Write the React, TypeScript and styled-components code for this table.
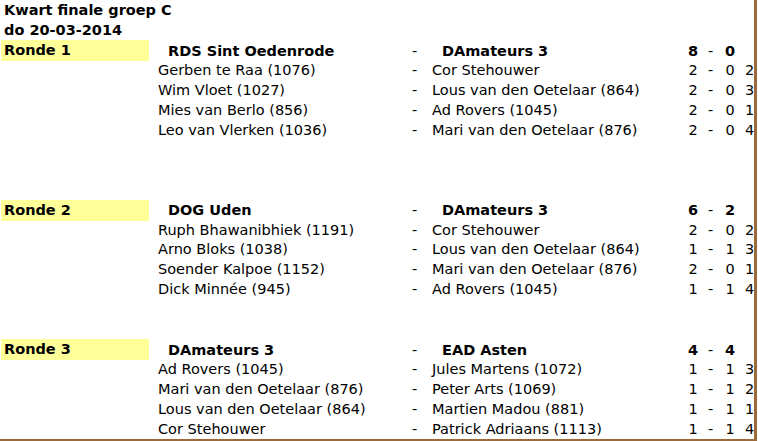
import React from 'react'
import styled, { createGlobalStyle } from 'styled-components'

const GlobalStyle = createGlobalStyle`
    html, body {
        margin: 0;
        padding: 0;
        background: #fff;
    }
    body {
        font-family: 'DejaVu Sans', Verdana, sans-serif;
        font-size: 14.5px;
        color: #000;
    }
`

const Sheet = styled.div`
    width: 754px;
    height: 439px;
    border-right: 3px solid #9c6a3b;
    border-bottom: 2px solid #9c6a3b;
    display: flex;
    flex-direction: column;
    overflow: hidden;
`

const Row = styled.div`
    display: grid;
    grid-template-columns: 150px 255px 27px 253px 16px 19px 20px 1fr;
    height: 20px;
    align-items: center;
    white-space: nowrap;
`

const Heading = styled.div`
    height: 20px;
    line-height: 21px;
    padding-left: 4px;
    font-weight: bold;
`

const Spacer = styled.div`
    height: 20px;
`

const RoundLabel = styled.div`
    margin-left: 1px;
    height: 21px;
    line-height: 21px;
    padding-left: 3px;
    background: #ffff99;
    font-weight: bold;
    width: 145px;
`

const Name = styled.div<{ $team?: boolean; $away?: boolean }>`
    font-weight: ${({ $team }) => ($team ? 'bold' : 'normal')};
    padding-left: ${({ $team, $away }) =>
        $away ? ($team ? '10px' : '0px') : $team ? '18px' : '8px'};
`

const Dash = styled.div`
    padding-left: 7px;
`

const Score = styled.div<{ $bold?: boolean }>`
    font-weight: ${({ $bold }) => ($bold ? 'bold' : 'normal')};
    text-align: center;
`

const Board = styled.div`
    padding-left: 5px;
`

type Game = { home: string; away: string; a: string; b: string; board: string }
type Round = { label: string; home: string; away: string; a: string; b: string; games: Game[]; gap: number }

const rounds: Round[] = [
    {
        label: 'Ronde 1',
        home: 'RDS Sint Oedenrode',
        away: 'DAmateurs 3',
        a: '8',
        b: '0',
        gap: 0,
        games: [
            { home: 'Gerben te Raa (1076)', away: 'Cor Stehouwer', a: '2', b: '0', board: '2' },
            { home: 'Wim Vloet (1027)', away: 'Lous van den Oetelaar (864)', a: '2', b: '0', board: '3' },
            { home: 'Mies van Berlo (856)', away: 'Ad Rovers (1045)', a: '2', b: '0', board: '1' },
            { home: 'Leo van Vlerken (1036)', away: 'Mari van den Oetelaar (876)', a: '2', b: '0', board: '4' },
        ],
    },
    {
        label: 'Ronde 2',
        home: 'DOG Uden',
        away: 'DAmateurs 3',
        a: '6',
        b: '2',
        gap: 3,
        games: [
            { home: 'Ruph Bhawanibhiek (1191)', away: 'Cor Stehouwer', a: '2', b: '0', board: '2' },
            { home: 'Arno Bloks (1038)', away: 'Lous van den Oetelaar (864)', a: '1', b: '1', board: '3' },
            { home: 'Soender Kalpoe (1152)', away: 'Mari van den Oetelaar (876)', a: '2', b: '0', board: '1' },
            { home: 'Dick Minnée (945)', away: 'Ad Rovers (1045)', a: '1', b: '1', board: '4' },
        ],
    },
    {
        label: 'Ronde 3',
        home: 'DAmateurs 3',
        away: 'EAD Asten',
        a: '4',
        b: '4',
        gap: 2,
        games: [
            { home: 'Ad Rovers (1045)', away: 'Jules Martens (1072)', a: '1', b: '1', board: '3' },
            { home: 'Mari van den Oetelaar (876)', away: 'Peter Arts (1069)', a: '1', b: '1', board: '2' },
            { home: 'Lous van den Oetelaar (864)', away: 'Martien Madou (881)', a: '1', b: '1', board: '1' },
            { home: 'Cor Stehouwer', away: 'Patrick Adriaans (1113)', a: '1', b: '1', board: '4' },
        ],
    },
]

export default function App() {
    return (
        <>
            <GlobalStyle />
            <Sheet>
                <Heading>Kwart finale groep C</Heading>
                <Heading>do 20-03-2014</Heading>
                {rounds.map((r) => (
                    <React.Fragment key={r.label}>
                        {Array.from({ length: r.gap }).map((_, i) => (
                            <Spacer key={i} />
                        ))}
                        <Row>
                            <RoundLabel>{r.label}</RoundLabel>
                            <Name $team>{r.home}</Name>
                            <Dash>-</Dash>
                            <Name $team $away>{r.away}</Name>
                            <Score $bold>{r.a}</Score>
                            <Score>-</Score>
                            <Score $bold>{r.b}</Score>
                            <Board />
                        </Row>
                        {r.games.map((g) => (
                            <Row key={g.board + g.home}>
                                <div />
                                <Name>{g.home}</Name>
                                <Dash>-</Dash>
                                <Name $away>{g.away}</Name>
                                <Score>{g.a}</Score>
                                <Score>-</Score>
                                <Score>{g.b}</Score>
                                <Board>{g.board}</Board>
                            </Row>
                        ))}
                    </React.Fragment>
                ))}
            </Sheet>
        </>
    )
}
